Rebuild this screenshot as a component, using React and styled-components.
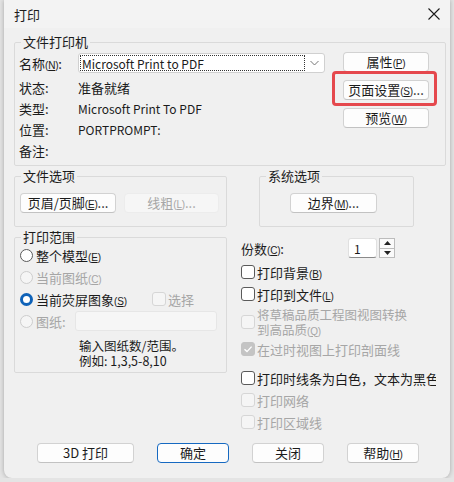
import React from "react"
import styled, { createGlobalStyle } from "styled-components"

const GlobalStyle = createGlobalStyle`
  html, body {
    margin: 0;
    background: #e4e4e4;
  }
  body {
    font-family: "Noto Sans CJK SC", "Noto Sans", sans-serif;
    font-size: 13px;
    color: #1b1b1b;
  }
`

const Window = styled.div`
  margin-left: 4px;
  width: 446px;
  height: 478px;
  background: #f0f0f0;
  border-radius: 0 0 8px 8px;
  box-shadow: 0 0 5px rgba(0, 0, 0, 0.28);
  overflow: hidden;
  display: flex;
  flex-direction: column;
`

const TitleBar = styled.div`
  height: 28px;
  flex: none;
  display: flex;
  align-items: center;
  justify-content: space-between;
  padding: 0 9px 0 10px;
  background: #f3f3f3;
  font-size: 13px;
`

const Body = styled.div`
  flex: 1;
  display: flex;
  flex-direction: column;
  padding: 6px 0 0 10px;
`

const Group = styled.fieldset`
  margin: 0;
  padding: 0;
  box-sizing: border-box;
  width: ${(p) => p.$w}px;
  height: ${(p) => p.$h}px;
  border: 1px solid #dadada;
  border-radius: 2px;
  min-width: 0;
  flex: none;
`

const Legend = styled.legend`
  margin-left: 6px;
  padding: 0 2px;
  font-size: 13px;
  line-height: 16px;
`

const Key = styled.span`
  font-family: "Liberation Sans", sans-serif;
  font-size: 10px;
  letter-spacing: -0.2px;
  u {
    text-underline-offset: 1px;
  }
`

const Latin = styled.span`
  font-family: "Noto Sans CJK SC", sans-serif;
  font-size: 12px;
`

const PrinterContent = styled.div`
  display: flex;
  justify-content: space-between;
  padding: 0 16px 0 4px;
`

const InfoColumn = styled.div`
  display: flex;
  flex-direction: column;
`

const NameRow = styled.div`
  display: flex;
  align-items: center;
  margin-top: 3px;
  height: 20px;
  margin-bottom: 4px;
`

const InfoRow = styled.div`
  display: flex;
  align-items: center;
  height: 21px;
`

const Label = styled.span`
  width: 59px;
  flex: none;
`

const Combo = styled.div`
  box-sizing: border-box;
  width: 247px;
  height: 20px;
  background: #fff;
  border: 1px solid #d0d0d0;
  border-radius: 3px;
  display: flex;
  align-items: center;
  padding: 1px;
`

const ComboText = styled.div`
  box-sizing: border-box;
  flex: 1;
  height: 16px;
  border: 1px dotted #333;
  display: flex;
  align-items: center;
  padding-left: 1px;
  font-size: 12px;
`

const ComboArrow = styled.div`
  width: 18px;
  display: flex;
  justify-content: center;
`

const ButtonStack = styled.div`
  display: flex;
  flex-direction: column;
  gap: 8px;
  margin-top: 2px;
`

const Button = styled.button`
  box-sizing: border-box;
  width: ${(p) => p.$w || 86}px;
  height: 20px;
  padding: 0;
  background: ${(p) => (p.disabled ? "#f6f6f6" : "#fdfdfd")};
  border: 1px solid ${(p) => (p.$focus ? "#1669c1" : p.disabled ? "#ececec" : "#d2d2d2")};
  border-bottom-color: ${(p) => (p.$focus ? "#1669c1" : p.disabled ? "#ececec" : "#c2c2c2")};
  border-radius: 4px;
  font-family: inherit;
  font-size: 13px;
  line-height: 18px;
  color: ${(p) => (p.disabled ? "#a6a6a6" : "#1b1b1b")};
  flex: none;
`

const Highlight = styled.div`
  position: relative;
  &::after {
    content: "";
    position: absolute;
    top: -9px;
    left: -11px;
    right: -8px;
    bottom: -6px;
    border: 3px solid #e5484d;
    border-radius: 4px;
    pointer-events: none;
  }
`

const MiddleRow = styled.div`
  display: flex;
  gap: 32px;
  margin-top: 2px;
`

const ButtonRow = styled.div`
  display: flex;
  gap: 8px;
  padding: ${(p) => p.$pad || "9px 0 0 5px"};
`

const LowerRow = styled.div`
  display: flex;
  margin-top: 2px;
`

const RangeContent = styled.div`
  display: flex;
  flex-direction: column;
  padding: 0 0 0 5px;
  margin-top: -1px;
`

const OptionRow = styled.div`
  display: flex;
  align-items: center;
  height: ${(p) => p.$h || 22}px;
  margin-top: ${(p) => p.$mt || 0}px;
  color: ${(p) => (p.$disabled ? "#a6a6a6" : "inherit")};
  white-space: nowrap;
`

const Radio = styled.span`
  box-sizing: border-box;
  width: 13px;
  height: 13px;
  border-radius: 50%;
  flex: none;
  margin-right: 3px;
  background: ${(p) => (p.$checked ? "#fff" : p.$disabled ? "#f5f5f5" : "#fff")};
  border: ${(p) =>
    p.$checked ? "3.5px solid #0f62b8" : p.$disabled ? "1px solid #cdcdcd" : "1px solid #5a5a5a"};
`

const RadioLabel = styled.span`
  width: ${(p) => (p.$w ? `${p.$w}px` : "auto")};
  flex: none;
  color: ${(p) => (p.$muted ? "#a6a6a6" : "inherit")};
`

const Check = styled.span`
  box-sizing: border-box;
  width: 14px;
  height: 14px;
  border-radius: 3px;
  flex: none;
  margin-right: 2px;
  display: flex;
  align-items: center;
  justify-content: center;
  background: ${(p) => (p.$checked ? "#c4c4c4" : p.$disabled ? "#f5f5f5" : "#fff")};
  border: 1px solid ${(p) => (p.$checked ? "#c4c4c4" : p.$disabled ? "#d6d6d6" : "#5a5a5a")};
`

const TextBox = styled.div`
  box-sizing: border-box;
  width: ${(p) => p.$w}px;
  height: 20px;
  background: ${(p) => (p.$disabled ? "#f6f6f6" : "#fff")};
  border: 1px solid ${(p) => (p.$disabled ? "#e6e6e6" : "#e0e0e0")};
  border-bottom-color: ${(p) => (p.$disabled ? "#e6e6e6" : "#8a8a8a")};
  border-radius: 3px;
  display: flex;
  align-items: center;
  padding-left: 5px;
  font-size: 12px;
  flex: none;
`

const Hint = styled.div`
  margin: 6px 0 0 59px;
`

const Line = styled.div`
  height: 15px;
  line-height: 15px;
  font-size: 12.5px;
`

const SideColumn = styled.div`
  margin-left: 14px;
  width: 195px;
  overflow: hidden;
  display: flex;
  flex-direction: column;
`

const CopiesRow = styled.div`
  display: flex;
  align-items: center;
  height: 20px;
  margin-top: 9px;
  margin-bottom: 3px;
`

const CopiesLabel = styled.span`
  width: 107px;
  flex: none;
`

const Spin = styled.div`
  box-sizing: border-box;
  width: 16px;
  height: 20px;
  margin-left: 2px;
  border: 1px solid #bcbcbc;
  background: #fafafa;
  display: flex;
  flex-direction: column;
`

const SpinHalf = styled.div`
  flex: 1;
  display: flex;
  align-items: center;
  justify-content: center;
  & + & {
    border-top: 1px solid #bcbcbc;
  }
`

const TwoLine = styled.div`
  display: flex;
  flex-direction: column;
`

const Footer = styled.div`
  margin-top: auto;
  display: flex;
  gap: 23px;
  padding: 0 0 15px 23px;
`

const K = ({ c }) => (
  <Key>
    (<u>{c}</u>)
  </Key>
)

const CheckMark = () => (
  <svg width="10" height="10" viewBox="0 0 10 10">
    <path d="M1.5 5.2 L4 7.6 L8.6 2.6" fill="none" stroke="#fff" strokeWidth="1.4" />
  </svg>
)

export default function App() {
  return (
    <>
      <GlobalStyle />
      <Window>
        <TitleBar>
          <span>打印</span>
          <svg width="14" height="14" viewBox="0 0 14 14">
            <path d="M1.5 1.5 L12.5 12.5 M12.5 1.5 L1.5 12.5" stroke="#1b1b1b" strokeWidth="1.1" />
          </svg>
        </TitleBar>
        <Body>
          <Group $w={432} $h={132}>
            <Legend>文件打印机</Legend>
            <PrinterContent>
              <InfoColumn>
                <NameRow>
                  <Label>
                    名称<K c="N" />:
                  </Label>
                  <Combo>
                    <ComboText>Microsoft Print to PDF</ComboText>
                    <ComboArrow>
                      <svg width="9" height="6" viewBox="0 0 9 6">
                        <path d="M0.5 1 L4.5 5 L8.5 1" fill="none" stroke="#777" strokeWidth="1" />
                      </svg>
                    </ComboArrow>
                  </Combo>
                </NameRow>
                <InfoRow>
                  <Label>状态:</Label>
                  <span>准备就绪</span>
                </InfoRow>
                <InfoRow>
                  <Label>类型:</Label>
                  <Latin>Microsoft Print To PDF</Latin>
                </InfoRow>
                <InfoRow>
                  <Label>位置:</Label>
                  <Latin>PORTPROMPT:</Latin>
                </InfoRow>
                <InfoRow>
                  <Label>备注:</Label>
                </InfoRow>
              </InfoColumn>
              <ButtonStack>
                <Button>
                  属性<K c="P" />
                </Button>
                <Highlight>
                  <Button>
                    页面设置<K c="S" />...
                  </Button>
                </Highlight>
                <Button>
                  预览<K c="W" />
                </Button>
              </ButtonStack>
            </PrinterContent>
          </Group>

          <MiddleRow>
            <Group $w={213} $h={59}>
              <Legend>文件选项</Legend>
              <ButtonRow>
                <Button $w={96}>
                  页眉/页脚<K c="E" />...
                </Button>
                <Button $w={95} disabled>
                  线粗<K c="L" />...
                </Button>
              </ButtonRow>
            </Group>
            <Group $w={155} $h={59}>
              <Legend>系统选项</Legend>
              <ButtonRow $pad="9px 0 0 30px">
                <Button $w={87}>
                  边界<K c="M" />...
                </Button>
              </ButtonRow>
            </Group>
          </MiddleRow>

          <LowerRow>
            <Group $w={213} $h={144}>
              <Legend>打印范围</Legend>
              <RangeContent>
                <OptionRow>
                  <Radio />
                  <RadioLabel>
                    整个模型<K c="E" />
                  </RadioLabel>
                </OptionRow>
                <OptionRow $disabled>
                  <Radio $disabled />
                  <RadioLabel>
                    当前图纸<K c="C" />
                  </RadioLabel>
                </OptionRow>
                <OptionRow>
                  <Radio $checked />
                  <RadioLabel $w={116}>
                    当前荧屏图象<K c="S" />
                  </RadioLabel>
                  <Check $disabled />
                  <RadioLabel $muted>选择</RadioLabel>
                </OptionRow>
                <OptionRow $disabled>
                  <Radio $disabled />
                  <RadioLabel $w={39}>图纸:</RadioLabel>
                  <TextBox $w={142} $disabled />
                </OptionRow>
                <Hint>
                  <Line>输入图纸数/范围。</Line>
                  <Line>例如: 1,3,5-8,10</Line>
                </Hint>
              </RangeContent>
            </Group>

            <SideColumn>
              <CopiesRow>
                <CopiesLabel>
                  份数<K c="C" />:
                </CopiesLabel>
                <TextBox $w={29}>1</TextBox>
                <Spin>
                  <SpinHalf>
                    <svg width="7" height="4" viewBox="0 0 7 4">
                      <path d="M0 4 L3.5 0 L7 4 Z" fill="#222" />
                    </svg>
                  </SpinHalf>
                  <SpinHalf>
                    <svg width="7" height="4" viewBox="0 0 7 4">
                      <path d="M0 0 L3.5 4 L7 0 Z" fill="#222" />
                    </svg>
                  </SpinHalf>
                </Spin>
              </CopiesRow>
              <OptionRow>
                <Check />
                <span>
                  打印背景<K c="B" />
                </span>
              </OptionRow>
              <OptionRow>
                <Check />
                <span>
                  打印到文件<K c="L" />
                </span>
              </OptionRow>
              <OptionRow $disabled $h={33}>
                <Check $disabled />
                <TwoLine>
                  <Line>将草稿品质工程图视图转换</Line>
                  <Line>
                    到高品质<K c="Q" />
                  </Line>
                </TwoLine>
              </OptionRow>
              <OptionRow $disabled>
                <Check $checked>
                  <CheckMark />
                </Check>
                <span>在过时视图上打印剖面线</span>
              </OptionRow>
              <OptionRow $mt={7}>
                <Check />
                <span>打印时线条为白色，文本为黑色</span>
              </OptionRow>
              <OptionRow $disabled>
                <Check $disabled />
                <span>打印网络</span>
              </OptionRow>
              <OptionRow $disabled>
                <Check $disabled />
                <span>打印区域线</span>
              </OptionRow>
            </SideColumn>
          </LowerRow>

          <Footer>
            <Button $w={97}>3D 打印</Button>
            <Button $w={72} $focus>
              确定
            </Button>
            <Button $w={72}>关闭</Button>
            <Button $w={72}>
              帮助<K c="H" />
            </Button>
          </Footer>
        </Body>
      </Window>
    </>
  )
}
